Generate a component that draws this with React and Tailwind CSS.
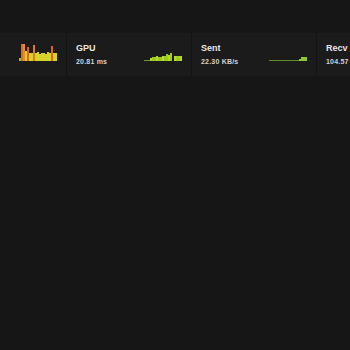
import React from "react";

function Graph({ bars }) {
  const w = 38;
  const h = 18;
  return (
    <svg width={w} height={h} viewBox={`0 0 ${w} ${h}`} className="mb-[6px] block shrink-0">
      {bars.map((b, i) => (
        <rect key={i} x={i * 2} y={h - b.v} width={2} height={b.v} fill={b.c} />
      ))}
    </svg>
  );
}

const fpsBars = [
  { v: 3, c: "#8cc43a" },
  { v: 17, c: "#e06a22" },
  { v: 17, c: "#e88a2a" },
  { v: 10, c: "#d6d42a" },
  { v: 14, c: "#e0641e" },
  { v: 8, c: "#d6d42a" },
  { v: 8, c: "#d6d42a" },
  { v: 16, c: "#e07828" },
  { v: 8, c: "#d6d42a" },
  { v: 9, c: "#d6d42a" },
  { v: 7, c: "#d6d42a" },
  { v: 8, c: "#d6d42a" },
  { v: 8, c: "#d6d42a" },
  { v: 7, c: "#d6d42a" },
  { v: 9, c: "#d6d42a" },
  { v: 8, c: "#d6d42a" },
  { v: 15, c: "#e0641e" },
  { v: 8, c: "#d6d42a" },
  { v: 8, c: "#d6d42a" },
];

const gpuBars = [1, 1, 1, 3, 4, 4, 5, 4, 4, 5, 5, 7, 6, 8, 0, 5, 5, 5, 5].map((v, i) => ({
  v,
  c: v <= 1 ? "#6a9a2a" : i % 3 === 0 ? "#b8d82a" : "#9ccc24",
}));

const sentBars = [1, 1, 1, 1, 1, 1, 1, 1, 1, 1, 1, 1, 1, 1, 1, 2, 4, 4, 4].map((v) => ({
  v,
  c: v <= 1 ? "#5e8e2a" : "#8cc830",
}));

function Cell({ label, value, graph }) {
  return (
    <div className="flex w-[124px] shrink-0 items-center justify-between bg-[#1b1b1b] pl-[9px] pr-[9px]">
      <div className="flex flex-col leading-none">
        {label && <span className="text-[9px] font-bold text-[#e6e6e6]">{label}</span>}
        {value && (
          <span className="mt-[5px] whitespace-nowrap text-[7px] font-bold tracking-[0.2px] text-[#d2d2d2]">
            {value}
          </span>
        )}
      </div>
      {graph}
    </div>
  );
}

export default function App() {
  return (
    <div
      className="h-[350px] w-[350px] overflow-hidden bg-[#161616] pt-[33px]"
      style={{ fontFamily: '"Liberation Sans", Arial, sans-serif' }}
    >
      <div className="ml-[-58px] flex h-[43px] gap-px bg-[#131313]">
        <Cell label="" value="" graph={<Graph bars={fpsBars} />} />
        <Cell label="GPU" value="20.81 ms" graph={<Graph bars={gpuBars} />} />
        <Cell label="Sent" value="22.30 KB/s" graph={<Graph bars={sentBars} />} />
        <Cell label="Recv" value="104.57 KB/s" graph={<Graph bars={sentBars} />} />
      </div>
    </div>
  );
}
